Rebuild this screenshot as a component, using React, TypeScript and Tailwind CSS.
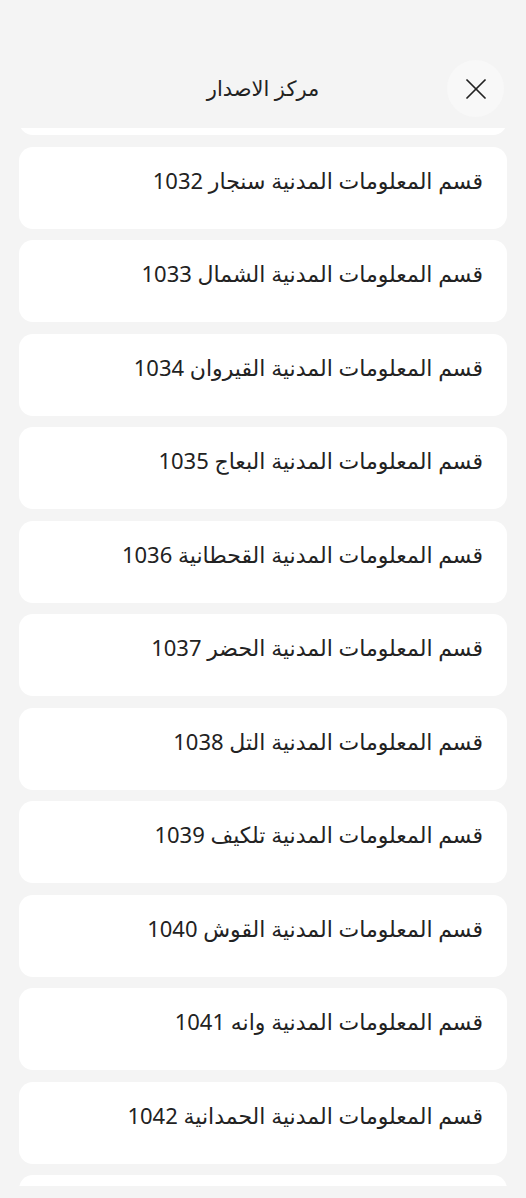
import { X } from "lucide-react";

const offices = [
  "قسم المعلومات المدنية سنجار 1032",
  "قسم المعلومات المدنية الشمال 1033",
  "قسم المعلومات المدنية القيروان 1034",
  "قسم المعلومات المدنية البعاج 1035",
  "قسم المعلومات المدنية القحطانية 1036",
  "قسم المعلومات المدنية الحضر 1037",
  "قسم المعلومات المدنية التل 1038",
  "قسم المعلومات المدنية تلكيف 1039",
  "قسم المعلومات المدنية القوش 1040",
  "قسم المعلومات المدنية وانه 1041",
  "قسم المعلومات المدنية الحمدانية 1042",
];

export default function App() {
  return (
    <div
      dir="rtl"
      className="h-[1198px] bg-[#f4f4f4] flex flex-col text-[#222222]"
      style={{ fontFamily: '"Noto Sans", "DejaVu Sans", sans-serif' }}
    >
      <header className="h-[128px] shrink-0 relative flex items-center justify-center pt-[48px]">
        <h1 className="text-[21px] leading-none">مركز الاصدار</h1>
        <button className="absolute left-[447px] top-[60px] w-[57px] h-[57px] rounded-full bg-[#f8f8f8] flex items-center justify-center">
          <X className="w-[36px] h-[36px] text-[#222222]" strokeWidth={1.15} />
        </button>
      </header>

      <div className="flex-1 overflow-hidden mb-[12px] px-[19px]">
        <div className="flex flex-col gap-[11.5px] -mt-[75px]">
          {/* tail of the card scrolled above */}
          <div className="h-[82px] rounded-[14px] bg-white shrink-0" />
          {offices.map((name) => (
            <div
              key={name}
              className="h-[82px] shrink-0 rounded-[14px] bg-white px-[24px] pt-[19px] text-[22px] leading-[28px]"
            >
              {name}
            </div>
          ))}
          {/* next card, only its top edge in view */}
          <div className="h-[82px] rounded-[14px] bg-white shrink-0" />
        </div>
      </div>
    </div>
  );
}
